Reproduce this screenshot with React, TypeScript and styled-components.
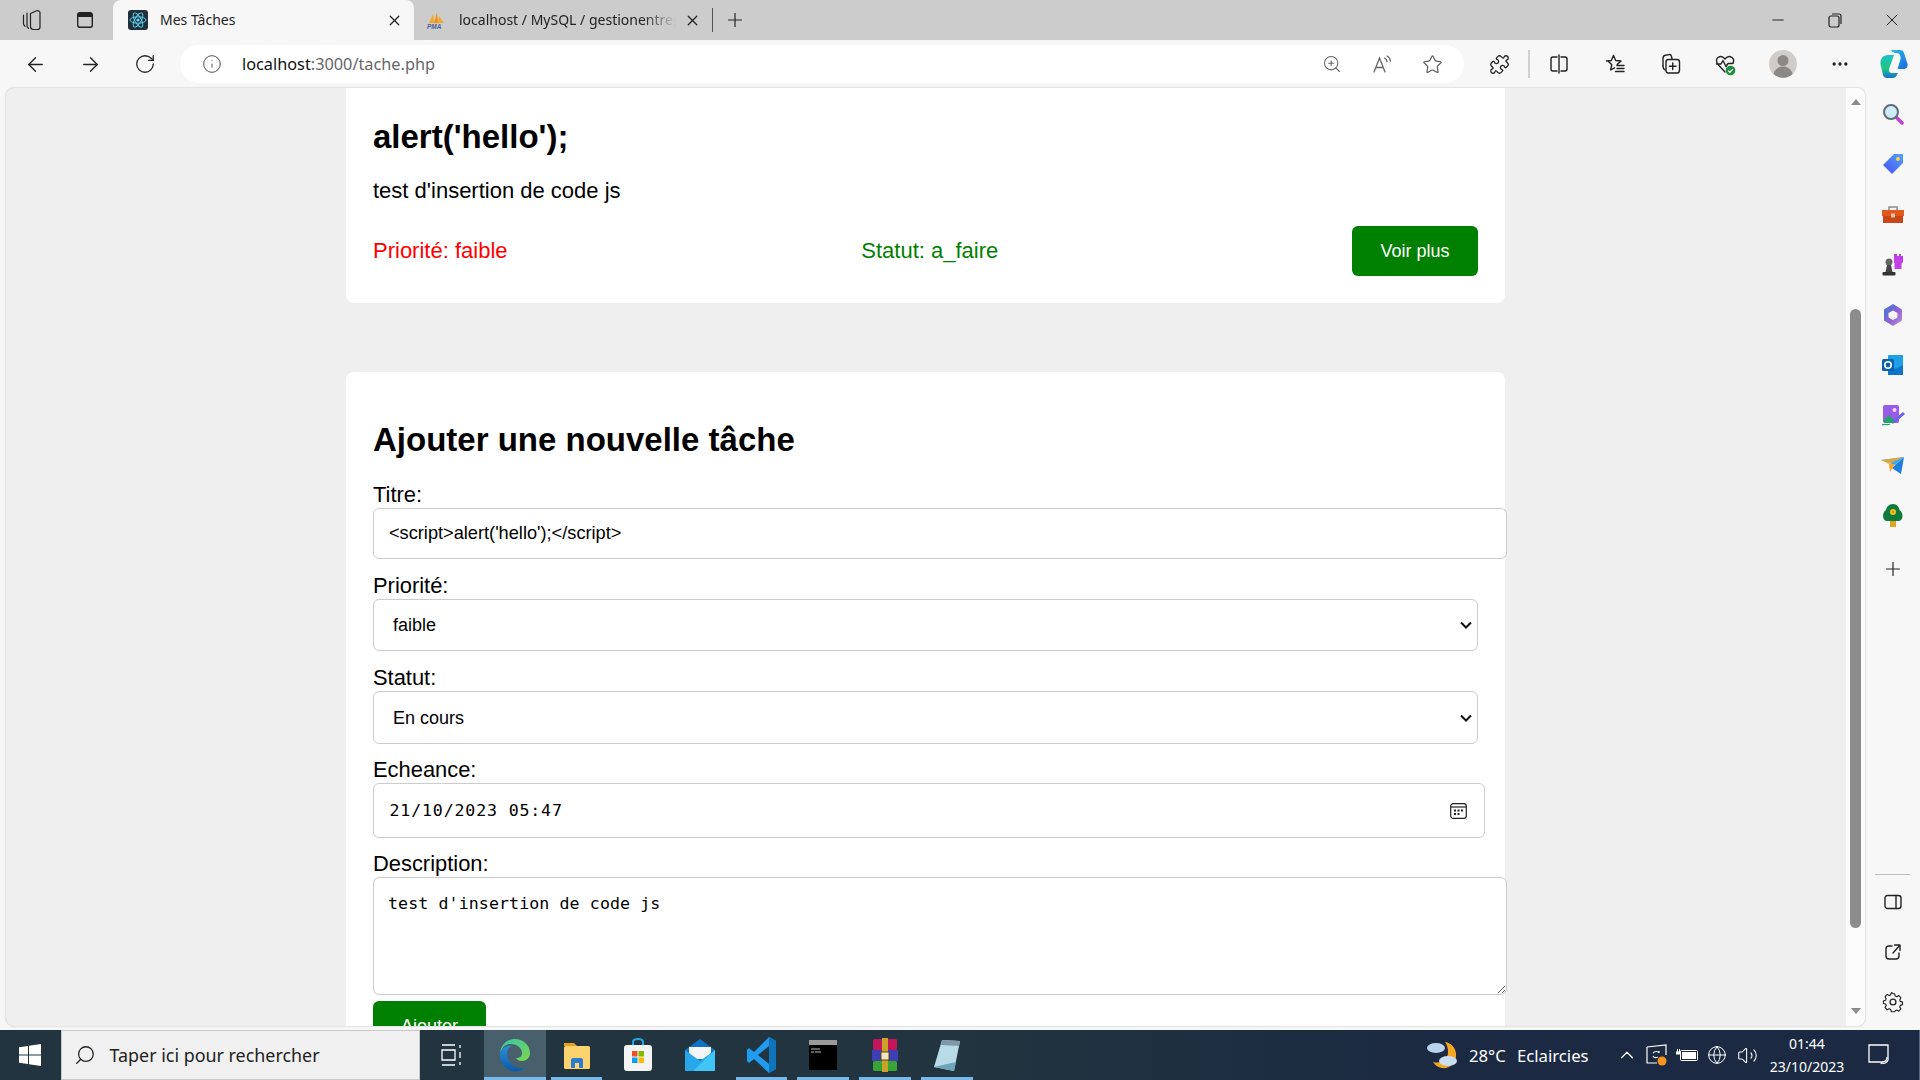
import React from "react";
import styled, { createGlobalStyle } from "styled-components";
import { ArrowLeft, ArrowRight, RotateCw, Info, ZoomIn, Star, Puzzle, X, Plus, Minus, MoreHorizontal, Search, ChevronUp, Globe, Volume2 } from "lucide-react";

const Global = createGlobalStyle`
  html, body { margin: 0; padding: 0; height: 100%; overflow: hidden; background: #f7f7f7; }
  #root { height: 100%; }
`;

const Shell = styled.div`
  height: 1080px; width: 1920px; display: flex; flex-direction: column; overflow: hidden;
  font-family: "Noto Sans", "Open Sans", sans-serif; color: #1b1b1b;
`;

/* tab strip */
const TabStrip = styled.div`
  height: 40px; flex: none; display: flex; align-items: stretch; background: #cccccc; padding-left: 5.5px;
`;
const Slot = styled.div<{ $w: number }>`
  width: ${p => p.$w}px; flex: none; display: flex; align-items: center; justify-content: center; color: #222;
`;
const Tab = styled.div<{ $active?: boolean; $w: number }>`
  width: ${p => p.$w}px; flex: none; display: flex; align-items: center; font-size: 14px; color: #222;
  padding-left: ${p => (p.$active ? 15 : 12)}px; box-sizing: border-box;
  background: ${p => (p.$active ? "#f7f7f7" : "transparent")};
  border-radius: 8px 8px 0 0; margin-left: ${p => (p.$active ? "1.5px" : "0")};
`;
const TabTitle = styled.span<{ $w: number; $gap: number; $fade?: boolean }>`
  width: ${p => p.$w}px; margin: 0 0 2px ${p => p.$gap}px; white-space: nowrap; overflow: hidden;
  ${p => p.$fade ? "mask-image: linear-gradient(90deg,#000 85%,transparent 100%);" : ""}
`;
const TabSep = styled.div`
  width: 1px; height: 24px; align-self: center; background: #555; flex: none;
`;
const Grow = styled.div`flex: 1;`;

/* toolbar */
const Toolbar = styled.div`
  height: 48px; flex: none; display: flex; align-items: center; background: #f7f7f7; padding-left: 7.5px;
`;
const AddressBar = styled.div`
  width: 1284px; height: 38px; flex: none; margin-left: 7.5px; background: #fff; border-radius: 19px;
  display: flex; align-items: center; padding: 0 7px 0 20px; box-sizing: border-box;
`;
const Url = styled.span`
  margin-left: 18px; font-size: 16.3px; color: #666; white-space: nowrap;
  b { font-weight: 400; color: #111; }
`;
const ToolSep = styled.div`
  width: 2px; height: 28px; background: #d0d0d0; margin: 0 1px; flex: none;
`;
const ToolGroup = styled.div`
  display: flex; align-items: center; margin-left: 7px; height: 100%;
`;

/* main */
const Main = styled.div`
  flex: 1; min-height: 0; display: flex; background: #f7f7f7;
`;
const Page = styled.div`
  width: 1859px; flex: none; margin: 0 0 4px 6px; display: flex; border-radius: 8px; overflow: hidden;
  box-shadow: 0 0 2px rgba(0,0,0,.28); background: #efefef;
`;
const Viewport = styled.div`
  flex: 1; min-width: 0; overflow: hidden; padding-left: 340px;
  font-family: "Liberation Sans", Arial, sans-serif; color: #000;
`;
const Card = styled.div<{ $mt?: number; $pt: number }>`
  width: 1159px; box-sizing: border-box; background: #fff; border-radius: ${p => (p.$mt ? "8px" : "0 0 8px 8px")};
  margin-top: ${p => p.$mt ?? 0}px; padding: ${p => p.$pt}px 27px 27px;
`;
const Title = styled.h2<{ $mb: number }>`
  margin: 0 0 ${p => p.$mb}px; font-size: 33px; line-height: 40px; font-weight: 700; white-space: nowrap;
`;
const Desc = styled.p`
  margin: 0 0 23px; font-size: 22px; line-height: 25px;
`;
const Meta = styled.div`
  display: flex; justify-content: space-between; align-items: center;
`;
const MetaText = styled.span<{ $c: string }>`
  color: ${p => p.$c}; font-size: 22px;
`;
const GreenButton = styled.button<{ $w: number }>`
  width: ${p => p.$w}px; height: 50px; border: 0; border-radius: 6px; background: #008000; color: #fff;
  font: 18px "Liberation Sans", Arial, sans-serif; padding: 0; display: block;
`;
const Label = styled.label<{ $mt?: number }>`
  display: block; margin-top: ${p => p.$mt ?? 0}px; font-size: 21.9px; line-height: 23px; padding-bottom: 2px;
`;
const TextInput = styled.input`
  display: block; box-sizing: border-box; width: 1134px; height: 51px; padding: 0 15px; margin: 0;
  border: 1.5px solid #ccc; border-radius: 6px; background: #fff; color: #000; outline: none;
  font: 18.2px "Liberation Sans", Arial, sans-serif;
`;
const SelectWrap = styled.div`
  position: relative; width: 100%;
`;
const Select = styled.select<{ $h: number }>`
  display: block; box-sizing: border-box; width: 100%; height: ${p => p.$h}px; padding: 0 30px 0 19px; margin: 0;
  appearance: none; border: 1.5px solid #ccc; border-radius: 6px; background: #fff; color: #000; outline: none;
  font: 18px "Liberation Sans", Arial, sans-serif;
`;
const Chevron = styled.svg`
  position: absolute; right: 6px; top: 50%; margin-top: -4px; pointer-events: none;
`;
const DateBox = styled.div`
  box-sizing: border-box; width: 1112px; height: 55px; border: 1.5px solid #ccc; border-radius: 6px;
  display: flex; align-items: center; padding: 0 17px 0 15.5px; justify-content: space-between;
`;
const DateValue = styled.input`
  border: 0; padding: 0; outline: none; background: transparent; width: 300px; color: #000;
  font: 16.6px "DejaVu Sans Mono", monospace; letter-spacing: .84px;
`;
const TextArea = styled.textarea`
  display: block; box-sizing: border-box; width: 1134px; height: 118px; padding: 15px 14px 0; margin: 0 0 6px;
  border: 1.5px solid #ccc; border-radius: 6px; background: #fff; color: #000; outline: none;
  font: 16.6px/22px "DejaVu Sans Mono", monospace; letter-spacing: .1px;
`;

/* scrollbar */
const Track = styled.div`
  width: 19px; flex: none; background: #fcfcfc; display: flex; flex-direction: column; align-items: center;
  padding: 11px 0 12px; box-sizing: border-box;
`;
const Arrow = styled.div<{ $down?: boolean }>`
  width: 0; height: 0; border-left: 5.5px solid transparent; border-right: 5.5px solid transparent;
  ${p => p.$down ? "border-top: 6px solid #8c8c8c; margin-top: auto;" : "border-bottom: 6px solid #8c8c8c;"}
`;
const Thumb = styled.div`
  width: 11px; height: 619px; margin-top: 204px; background: #8c8c8c; border-radius: 6px; flex: none;
`;

/* sidebar */
const Sidebar = styled.div`
  flex: 1; display: flex; flex-direction: column; align-items: center; padding: 1px 0 3px;
`;
const SideSlot = styled.div<{ $mt?: number }>`
  height: 50px; margin-top: ${p => p.$mt ?? 0.3}px; width: 100%; flex: none; display: flex; align-items: center; justify-content: center; color: #222;
`;
const SideRule = styled.div`
  width: 35px; height: 1px; background: #bdbdbd; margin-bottom: 2px; flex: none;
`;

/* taskbar */
const Taskbar = styled.div`
  height: 50px; flex: none; display: flex; align-items: stretch; color: #fff;
  background: linear-gradient(90deg, #21343f 0%, #21343f 50%, #1b2a42 75%, #1b2a42 100%);
`;
const StartButton = styled.div`
  width: 60.5px; flex: none; display: flex; align-items: center; justify-content: center;
`;
const SearchBox = styled.div`
  width: 359.5px; flex: none; box-sizing: border-box; background: #f0f0f0; border: 1px solid #c8c8c8;
  display: flex; align-items: center; padding-left: 12px; color: #222; font-size: 17.9px; gap: 14px; white-space: nowrap;
`;
const AppSlot = styled.div<{ $active?: boolean; $on?: boolean }>`
  width: 61.7px; flex: none; display: flex; align-items: center; justify-content: center; position: relative;
  background: ${p => (p.$active ? "#47606c" : "transparent")};
  ${p => p.$on ? `&::after { content: ""; position: absolute; bottom: 0; height: 3px; background: #76b9ed;
    left: ${p.$active ? 0 : 5}px; right: ${p.$active ? 0 : 5}px; }` : ""}
`;
const Weather = styled.div`
  margin-left: auto; width: 185px; flex: none; box-sizing: border-box; display: flex; align-items: center; font-size: 16.7px; white-space: nowrap;
`;
const WeatherText = styled.span<{ $w: number; $ml: number }>`
  width: ${p => p.$w}px; margin-left: ${p => p.$ml}px; flex: none;
`;
const Tray = styled.div`
  width: 30px; flex: none; display: flex; align-items: center; justify-content: center;
`;
const Clock = styled.div`
  width: 90px; flex: none; display: flex; flex-direction: column; align-items: center; justify-content: center; font-size: 14px; line-height: 23px; white-space: nowrap;
`;
const NotifySlot = styled.div`
  width: 54px; flex: none; display: flex; align-items: center; justify-content: center;
`;
const ShowDesktop = styled.div`
  width: 14px; flex: none; box-sizing: border-box; border-right: 1px solid #5c6878;
`;

/* drawings */
const line = { fill: "none", stroke: "currentColor", strokeWidth: 1.4, strokeLinecap: "round" as const, strokeLinejoin: "round" as const };

const SelectChevron = () => (
  <Chevron width="12" height="8" viewBox="0 0 12 8"><path d="M1 1.500l5 5 5-5" fill="none" stroke="#111" strokeWidth="2" /></Chevron>
);
const Workspaces = () => (
  <svg width="22" height="24" viewBox="0 0 22 24" {...line} strokeWidth={1.2}>
    <path d="M2.500 7v8.500c0 1.200.6 2 1.500 2.800" /><path d="M6 5v12.500c0 1.200.6 2 1.500 2.800" />
    <path d="M9.500 5.500l6-2.700c1.500-.6 3.500.4 3.500 2v14.200c0 1.500-1 2.500-2.500 2.500h-4c-1.700 0-3-1.200-3-3z" />
  </svg>
);
const TabActions = () => (
  <svg width="20" height="20" viewBox="0 0 20 20">
    <rect x="2.700" y="2.700" width="14.600" height="14.600" rx="2.400" fill="none" stroke="#222" strokeWidth="1.400" />
    <path d="M3 5c0-1.200.8-2 2-2h10c1.200 0 2 .8 2 2v2H3z" fill="#222" />
  </svg>
);
const ReactFav = () => (
  <svg width="20" height="20" viewBox="0 0 20 20">
    <rect width="20" height="20" rx="3" fill="#20303a" />
    <g fill="none" stroke="#61dafb" strokeWidth=".9">
      <ellipse cx="10" cy="10" rx="8" ry="3.200" /><ellipse cx="10" cy="10" rx="8" ry="3.200" transform="rotate(60 10 10)" /><ellipse cx="10" cy="10" rx="8" ry="3.200" transform="rotate(120 10 10)" />
    </g>
    <circle cx="10" cy="10" r="1.600" fill="#61dafb" />
  </svg>
);
const PmaFav = () => (
  <svg width="20" height="20" viewBox="0 0 20 20">
    <path d="M3 13L7 4l1 9z" fill="#f6a821" /><path d="M8 13l3-11 1 11z" fill="#f29111" /><path d="M12 13l1-7 5 7z" fill="#f6a821" />
    <text x="1" y="19" fontSize="6.500" fontStyle="italic" fontWeight="700" fill="#4a5e9b" fontFamily="Liberation Sans">PMA</text>
  </svg>
);
const Restore = () => (
  <svg width="16" height="16" viewBox="0 0 16 16" fill="none" stroke="#222" strokeWidth="1.200">
    <rect x="2" y="4" width="10" height="11" rx="2" /><path d="M5 2h7c1.200 0 2 .8 2 2v8" />
  </svg>
);
const ReadAloud = () => (
  <svg width="22" height="22" viewBox="0 0 22 22" fill="none" stroke="#666" strokeWidth="1.300" strokeLinecap="round">
    <path d="M3 19L8.500 5 14 19M5 14.500h7" /><path d="M13.500 5c1.400.7 2.300 2 2.600 3.600M16 3c2 1 3.200 3 3.500 5" />
  </svg>
);
const SplitScreen = () => (
  <svg width="22" height="22" viewBox="0 0 22 22" {...line} stroke="#222">
    <path d="M9 4H5C3.800 4 3 4.800 3 6v10c0 1.200.8 2 2 2h4M13 4h4c1.200 0 2 .8 2 2v10c0 1.200-.8 2-2 2h-4M11 2v18" />
  </svg>
);
const Favorites = () => (
  <svg width="22" height="22" viewBox="0 0 22 22" {...line} stroke="#222">
    <path d="M9.500 2.500l2.200 5 5.300.5-3.800 3.500M4 8l3.800 3.700L6.600 17l4-2.200M9.500 2.500L7.300 7.500 2.500 8" />
    <path d="M13 12.500h7M13 15.500h7M11.500 18.500h8.500" />
  </svg>
);
const Collections = () => (
  <svg width="22" height="22" viewBox="0 0 22 22" {...line} stroke="#222">
    <path d="M4 13V5c0-1.500 1-2.500 2.400-2.800L10 1.600c1.300-.2 2.200.5 2.500 1.700L13 6" />
    <path d="M4 13c0 1.700.6 3 1.800 3.800" />
    <rect x="7" y="6.500" width="13.500" height="13.500" rx="2.400" /><path d="M13.700 10v6.500M10.500 13.200H17" />
  </svg>
);
const HeartCheck = () => (
  <svg width="24" height="24" viewBox="0 0 24 24">
    <path d="M12 20l-7-7.500C3 10 3 7 5 5.500c2.200-1.600 5-1 7 1.500 2-2.500 4.800-3.100 7-1.500 1.800 1.400 2 3.600 1 5.500" {...line} stroke="#222" />
    <path d="M3.500 12H8l2-3.500 3 6 2-3h5" {...line} stroke="#222" />
    <circle cx="17.500" cy="18.500" r="4.800" fill="#1e8e3e" /><path d="M15.200 18.600l1.700 1.700 3-3.200" fill="none" stroke="#fff" strokeWidth="1.300" />
  </svg>
);
const Avatar = () => (
  <svg width="28" height="28" viewBox="0 0 28 28">
    <circle cx="14" cy="14" r="14" fill="#cfccca" /><circle cx="14" cy="10.500" r="5.500" fill="#8c8885" /><path d="M4.500 24c1-5 5-7.500 9.500-7.500s8.500 2.500 9.500 7.500a14 14 0 0 1-19 0z" fill="#8c8885" />
  </svg>
);
const Copilot = () => (
  <svg width="30" height="30" viewBox="0 0 30 30">
    <defs>
      <linearGradient id="cpA" x1="0" y1="0" x2="1" y2="1"><stop offset="0" stopColor="#27c3e8" /><stop offset="1" stopColor="#1a66e0" /></linearGradient>
      <linearGradient id="cpB" x1="0" y1="0" x2="0" y2="1"><stop offset="0" stopColor="#1cc3c8" /><stop offset=".6" stopColor="#21c47f" /><stop offset="1" stopColor="#1570d8" /></linearGradient>
    </defs>
    <path d="M12 1h9c2 0 3.500 1 4 3l3.500 11c.7 2.500-1 5-4 5h-6l3-10c.7-3-1-6-4-6-2 0-4 0-5.500-3z" fill="url(#cpA)" />
    <path d="M9 6h6l-5 14c-.6 2 .5 4 3 4h6c-1 3-3 5-6 5H8c-2 0-3.500-1-4-3L1.500 15C1 10 4 6 9 6z" fill="url(#cpB)" />
  </svg>
);
const SearchPurple = () => (
  <svg width="22" height="22" viewBox="0 0 22 22">
    <path d="M14 14l6 6" stroke="#c33fd8" strokeWidth="3.500" strokeLinecap="round" />
    <circle cx="9" cy="9" r="7" fill="#cfeaf8" stroke="#5f6d77" strokeWidth="2" />
  </svg>
);
const TagIcon = () => (
  <svg width="22" height="22" viewBox="0 0 22 22">
    <defs><linearGradient id="tg" x1="0" y1="1" x2="1" y2="0"><stop offset="0" stopColor="#4d4cf5" /><stop offset="1" stopColor="#4ca5f9" /></linearGradient></defs>
    <path d="M12 1h8c.7 0 1 .4 1 1v8L10 21 1 12z" fill="url(#tg)" /><circle cx="16" cy="6" r="2" fill="#ffd23c" />
  </svg>
);
const Toolbox = () => (
  <svg width="24" height="22" viewBox="0 0 24 22">
    <path d="M8 6V3h8v3" fill="none" stroke="#8a8a8a" strokeWidth="1.500" />
    <rect x="1" y="6" width="22" height="6" fill="#e2571e" /><rect x="2" y="12" width="20" height="7" fill="#c8461a" />
    <rect x="10" y="9.500" width="4" height="4" rx="1" fill="#f7c9a8" />
  </svg>
);
const Chess = () => (
  <svg width="24" height="24" viewBox="0 0 24 24">
    <path d="M14 1h2v2h2V1h2v2h2v6l-1.500 1.500V16h-7v-5.500L13 9V1z" fill="#c53fe8" />
    <circle cx="8" cy="9" r="3.500" fill="#666" /><path d="M6 12h4l1.500 7h-7z" fill="#444" /><rect x="1.500" y="19" width="13" height="3.500" rx="1" fill="#333" />
  </svg>
);
const M365 = () => (
  <svg width="22" height="24" viewBox="0 0 22 24">
    <defs><linearGradient id="ms" x1="0" y1="0" x2="1" y2="1"><stop offset="0" stopColor="#2d7fd9" /><stop offset=".5" stopColor="#8b5fd4" /><stop offset="1" stopColor="#c68fe0" /></linearGradient></defs>
    <path d="M11 1l9 5.500v11L11 23 2 17.500v-11z" fill="url(#ms)" /><path d="M11 7.500l4.500 2.500v4.500L11 17l-4.500-2.500V10z" fill="#f7f7f7" />
  </svg>
);
const Outlook = () => (
  <svg width="22" height="22" viewBox="0 0 22 22">
    <rect x="6" y="1" width="15" height="20" rx="1" fill="#1da1e6" /><path d="M6 11l7.500 4L21 11v10H6z" fill="#0f75c8" />
    <rect x="0" y="5" width="12" height="12" rx="1.500" fill="#0a5fb0" /><circle cx="6" cy="11" r="3.200" fill="none" stroke="#fff" strokeWidth="1.600" />
  </svg>
);
const Designer = () => (
  <svg width="24" height="24" viewBox="0 0 24 24">
    <rect x="2" y="1" width="16" height="18" rx="2" fill="#9a5be8" /><circle cx="13.500" cy="6" r="2" fill="#f0e2fb" />
    <path d="M2 17l6-6 6 6v2H4z" fill="#23a267" /><path d="M22 8l2 2-9 8-4 2 2-4z" fill="#6c63e9" /><path d="M1 21c3-2 5 1 8-1" fill="none" stroke="#23a267" strokeWidth="1.200" />
  </svg>
);
const Plane = () => (
  <svg width="24" height="20" viewBox="0 0 24 20">
    <path d="M0 4l23-3-9 8z" fill="#35a7f2" /><path d="M23 1l-3 17-9-6z" fill="#1a7ee0" /><path d="M14 8L9 16l-1-8z" fill="#f5a623" /><path d="M0 4l8 4 15-7z" fill="#f5a623" opacity=".85" />
  </svg>
);
const TreeIcon = () => (
  <svg width="20" height="24" viewBox="0 0 20 24">
    <rect x="7" y="16" width="6" height="7" fill="#e2a11e" /><path d="M10 0c4 0 6 3 6.500 6 2 1 3 4 3 6 0 3-2 5-4 5H4c-2 0-4-2-4-5 0-2 1-5 3-6 .5-3 3-6 7-6z" fill="#0f7a3c" />
    <circle cx="10" cy="8" r="3" fill="#f5c518" /><circle cx="10" cy="8" r="1.200" fill="#d98a00" />
  </svg>
);
const PanelIcon = () => (
  <svg width="18" height="16" viewBox="0 0 18 16" {...line} stroke="#222">
    <rect x="1" y="1.500" width="16" height="13" rx="2.500" /><path d="M12 1.500v13" />
  </svg>
);
const ExternalIcon = () => (
  <svg width="18" height="18" viewBox="0 0 18 18" {...line} stroke="#222">
    <path d="M8 3H5C3 3 2 4 2 6v7c0 2 1 3 3 3h7c2 0 3-1 3-3v-3" /><path d="M9 10l7-8M10.500 2H16v5.500" />
  </svg>
);
const Gear = () => (
  <svg width="22" height="22" viewBox="0 0 24 24" {...line} stroke="#222">
    <path d="M12 2l2 .3.8 2.700 1.800.8 2.500-1.300 2.500 2.800-1.400 2.300.6 1.900 2.700.9v3l-2.700.9-.7 1.800 1.400 2.400-2.500 2.800-2.500-1.300-1.800.8L14 24h-4l-.8-2.800-1.800-.8-2.500 1.300-2.500-2.800 1.400-2.400-.7-1.800L.4 14v-3l2.700-.9.600-1.900L2.300 5.900l2.500-2.800 2.500 1.300 1.800-.8L10 .8z" transform="translate(1.200 1) scale(.9)" />
    <circle cx="12" cy="12" r="3.200" />
  </svg>
);
const CalendarIcon = () => (
  <svg width="17" height="16" viewBox="0 0 17 16">
    <rect x=".7" y=".7" width="15.600" height="14.600" rx="2.500" fill="none" stroke="#222" strokeWidth="1.200" />
    <path d="M1 4h15" stroke="#222" strokeWidth="1.200" />
    <g fill="#222"><rect x="4" y="6.500" width="2" height="2" /><rect x="7.500" y="6.500" width="2" height="2" /><rect x="11" y="6.500" width="2" height="2" /><rect x="4" y="10" width="2" height="2" /><rect x="7.500" y="10" width="2" height="2" /></g>
  </svg>
);
const WinLogo = () => (
  <svg width="22" height="22" viewBox="0 0 22 22" fill="#fff">
    <path d="M0 3.200l9-1.300v8.600H0zM10 1.700L22 0v10.500H10zM0 11.500h9v8.600l-9-1.300zM10 11.500h12V22l-12-1.700z" />
  </svg>
);
const TaskView = () => (
  <svg width="22" height="24" viewBox="0 0 22 24" fill="none" stroke="#fff" strokeWidth="1.300">
    <path d="M1 2h13M1 22h13M1 7h13v10H1zM19 2v3M19 9v6M19 19v3" />
  </svg>
);
const EdgeIcon = () => (
  <svg width="32" height="34" viewBox="0 0 32 34">
    <defs>
      <linearGradient id="eg" x1="0" y1="0" x2="1" y2="1"><stop offset="0" stopColor="#36c6a8" /><stop offset="1" stopColor="#7bd84f" /></linearGradient>
      <linearGradient id="eb" x1="0" y1="0" x2="0" y2="1"><stop offset="0" stopColor="#2a8fdc" /><stop offset="1" stopColor="#0c5aa6" /></linearGradient>
    </defs>
    <path d="M1 15C2 6 9 1 16 1c9 0 15 7 15 14 0 5-4 8-8 8-3 0-5-1-6-3 4 0 6-2 6-5 0-5-5-9-11-9S3 10 1 15z" fill="url(#eg)" />
    <path d="M1 15c2-5 7-8 12-7-3 1-5 4-5 8 0 7 6 13 13 14 2 .3 4 0 5-.5-3 3-7 4-10 4C8 33 0 25 1 15z" fill="url(#eb)" />
  </svg>
);
const FolderIcon = () => (
  <svg width="30" height="30" viewBox="0 0 30 30">
    <path d="M2 3h10l3 3h-13z" fill="#e4a11b" /><rect x="2" y="6" width="26" height="23" rx="1.500" fill="#fcd36e" />
    <path d="M9 28v-8c0-1 .8-2 2-2h8c1.200 0 2 1 2 2v8h-4v-5h-4v5z" fill="#2b7bd0" />
  </svg>
);
const StoreIcon = () => (
  <svg width="30" height="34" viewBox="0 0 30 34">
    <path d="M10 8V4c0-2 2-3 5-3s5 1 5 3v4" fill="none" stroke="#22a7e0" strokeWidth="2" />
    <rect x="1" y="7" width="28" height="26" rx="3" fill="#f4f4f4" />
    <rect x="9" y="13" width="5.500" height="5.500" fill="#f25022" /><rect x="15.500" y="13" width="5.500" height="5.500" fill="#7fba00" /><rect x="9" y="19.500" width="5.500" height="5.500" fill="#00a4ef" /><rect x="15.500" y="19.500" width="5.500" height="5.500" fill="#ffb900" />
  </svg>
);
const MailIcon = () => (
  <svg width="30" height="32" viewBox="0 0 30 32">
    <path d="M0 11L15 0l15 11v21H0z" fill="#1072c4" /><path d="M4 8h22v12H4z" fill="#f5f5f5" />
    <path d="M0 11l15 11 15-11v21H0z" fill="#28a8ea" /><path d="M30 11v21H8z" fill="#50d9ff" opacity=".6" />
  </svg>
);
const VsCode = () => (
  <svg width="30" height="38" viewBox="0 0 30 38">
    <path d="M22 1l7 4v28l-7 4-15-14-5 4-2-2v-11l2-2 5 4z" fill="#1f9cf0" /><path d="M22 10L11 19l11 9z" fill="#21343f" /><path d="M22 1l7 4v28l-7 4z" fill="#0e74bc" />
  </svg>
);
const Terminal = () => (
  <svg width="28" height="30" viewBox="0 0 28 30">
    <rect width="28" height="30" fill="#000" /><rect width="28" height="5" fill="#9b9b9b" />
    <path d="M2 9h9M2 12h3M6 12h6" stroke="#bbb" strokeWidth="1" />
  </svg>
);
const WinRar = () => (
  <svg width="28" height="34" viewBox="0 0 28 34">
    <rect x="2" y="1" width="24" height="11" rx="1.500" fill="#c2185b" /><rect x="1" y="12" width="26" height="11" fill="#3f3fb5" /><rect x="2" y="23" width="24" height="10" rx="1.500" fill="#3aa335" />
    <rect x="11" y="0" width="6" height="34" fill="#c9a227" /><rect x="10" y="14" width="8" height="8" fill="#f2e6c2" stroke="#5c4a16" />
  </svg>
);
const NotepadIcon = () => (
  <svg width="28" height="34" viewBox="0 0 28 34">
    <path d="M9 2l18 1-6 30-20-4z" fill="#b8dbe8" /><path d="M9 2l18 1-1 5-18-1z" fill="#7f9aa6" /><path d="M1 29l20 4 2-9z" fill="#6fa5b8" />
  </svg>
);
const WeatherIcon = () => (
  <svg width="32" height="30" viewBox="0 0 32 30">
    <path d="M18 2c7 1 12 7 11 15-1 7-7 12-14 11-4-.5-7-3-9-6 8 2 15-2 15-10 0-4-1-7-3-10z" fill="#f5a623" />
    <ellipse cx="9" cy="8" rx="9" ry="5" fill="#b9d4ec" /><ellipse cx="21" cy="21" rx="9" ry="5" fill="#c9def0" />
  </svg>
);
const ActionIcon = () => (
  <svg width="22" height="22" viewBox="0 0 22 22" fill="none" stroke="#fff" strokeWidth="1.200">
    <path d="M1 3l19-2v10M1 3v16h10" /><path d="M7 9c2-2 5-2 6 0M13 9v-2M7 12c1 2 3 2 5 1" /><circle cx="16" cy="17" r="4.500" fill="#f7931e" stroke="none" />
  </svg>
);
const BatteryIcon = () => (
  <svg width="22" height="14" viewBox="0 0 22 14" fill="#fff">
    <rect x="4.500" y="2.500" width="17" height="10" rx="1" fill="none" stroke="#fff" /><rect x="6" y="4" width="14" height="7" />
    <path d="M0 3.500h5v3H0zM1 1h1v2.500H1zM3 1h1v2.500H3z" />
  </svg>
);
const NotifyIcon = () => (
  <svg width="22" height="22" viewBox="0 0 22 22" fill="none" stroke="#fff" strokeWidth="1.300">
    <path d="M1 1h19v15c-1 3-4 4-6 3l-1-1H1z" /><path d="M14 18l-1 2M19 13c0 3-2 5-5 5" />
  </svg>
);

export default function App() {
  return (
    <Shell>
      <Global />
      <TabStrip>
        <Slot $w={53}><Workspaces /></Slot>
        <Slot $w={53}><TabActions /></Slot>
        <Tab $active $w={301}>
          <ReactFav />
          <TabTitle $w={224} $gap={12}>Mes Tâches</TabTitle>
          <Slot $w={20}><X size={17} strokeWidth={1.8} /></Slot>
        </Tab>
        <Tab $w={298}>
          <PmaFav />
          <TabTitle $w={217} $gap={13} $fade>localhost / MySQL / gestionentreprise</TabTitle>
          <Slot $w={32}><X size={17} strokeWidth={1.8} /></Slot>
        </Tab>
        <TabSep />
        <Slot $w={44}><Plus size={22} strokeWidth={1.3} /></Slot>
        <Grow />
        <Slot $w={57}><Minus size={18} strokeWidth={1.3} /></Slot>
        <Slot $w={57}><Restore /></Slot>
        <Slot $w={57}><X size={20} strokeWidth={1.2} /></Slot>
      </TabStrip>
      <Toolbar>
        <Slot $w={55}><ArrowLeft size={23} strokeWidth={1.4} /></Slot>
        <Slot $w={55}><ArrowRight size={23} strokeWidth={1.4} /></Slot>
        <Slot $w={55}><RotateCw size={22} strokeWidth={1.4} /></Slot>
        <AddressBar>
          <Slot $w={24}><Info size={20} strokeWidth={1.2} color="#555" /></Slot>
          <Url><b>localhost</b>:3000/tache.php</Url>
          <Grow />
          <Slot $w={50}><ZoomIn size={20} strokeWidth={1.3} color="#666" /></Slot>
          <Slot $w={50}><ReadAloud /></Slot>
          <Slot $w={50}><Star size={21} strokeWidth={1.3} color="#555" /></Slot>
        </AddressBar>
        <ToolGroup>
          <Slot $w={56}><Puzzle size={21} strokeWidth={1.5} /></Slot>
          <ToolSep />
          <Slot $w={56}><SplitScreen /></Slot>
          <Slot $w={55}><Favorites /></Slot>
          <Slot $w={55}><Collections /></Slot>
          <Slot $w={56}><HeartCheck /></Slot>
          <Slot $w={59}><Avatar /></Slot>
          <Slot $w={56}><MoreHorizontal size={20} strokeWidth={2} /></Slot>
          <Slot $w={51}><Copilot /></Slot>
        </ToolGroup>
      </Toolbar>
      <Main>
        <Page>
          <Viewport>
            <Card $pt={29}>
              <Title $mb={21}>alert('hello');</Title>
              <Desc>test d'insertion de code js</Desc>
              <Meta>
                <MetaText $c="#ff0000">Priorité: faible</MetaText>
                <MetaText $c="#008000">Statut: a_faire</MetaText>
                <GreenButton $w={126}>Voir plus</GreenButton>
              </Meta>
            </Card>
            <Card $mt={69} $pt={48}>
              <Title $mb={23}>Ajouter une nouvelle tâche</Title>
              <Label>Titre:</Label>
              <TextInput readOnly value="<script>alert('hello');</script>" />
              <Label $mt={15}>Priorité:</Label>
              <SelectWrap>
                <Select $h={52} defaultValue="faible"><option value="faible">faible</option></Select>
                <SelectChevron />
              </SelectWrap>
              <Label $mt={15}>Statut:</Label>
              <SelectWrap>
                <Select $h={53} defaultValue="en"><option value="en">En cours</option></Select>
                <SelectChevron />
              </SelectWrap>
              <Label $mt={14}>Echeance:</Label>
              <DateBox><DateValue readOnly value="21/10/2023 05:47" /><CalendarIcon /></DateBox>
              <Label $mt={14}>Description:</Label>
              <TextArea readOnly value="test d'insertion de code js" />
              <GreenButton $w={113}>Ajouter</GreenButton>
            </Card>
          </Viewport>
          <Track>
            <Arrow />
            <Thumb />
            <Arrow $down />
          </Track>
        </Page>
        <Sidebar>
          <SideSlot $mt={0}><SearchPurple /></SideSlot>
          <SideSlot><TagIcon /></SideSlot>
          <SideSlot><Toolbox /></SideSlot>
          <SideSlot><Chess /></SideSlot>
          <SideSlot><M365 /></SideSlot>
          <SideSlot><Outlook /></SideSlot>
          <SideSlot><Designer /></SideSlot>
          <SideSlot><Plane /></SideSlot>
          <SideSlot><TreeIcon /></SideSlot>
          <SideSlot $mt={3}><Plus size={22} strokeWidth={1.3} /></SideSlot>
          <Grow />
          <SideRule />
          <SideSlot $mt={0}><PanelIcon /></SideSlot>
          <SideSlot $mt={0}><ExternalIcon /></SideSlot>
          <SideSlot $mt={0}><Gear /></SideSlot>
        </Sidebar>
      </Main>
      <Taskbar>
        <StartButton><WinLogo /></StartButton>
        <SearchBox><Search size={22} strokeWidth={1.4} style={{ transform: "scaleX(-1)" }} />Taper ici pour rechercher</SearchBox>
        <Slot $w={64} style={{ color: "#fff" }}><TaskView /></Slot>
        <AppSlot $active $on><EdgeIcon /></AppSlot>
        <AppSlot $on><FolderIcon /></AppSlot>
        <AppSlot><StoreIcon /></AppSlot>
        <AppSlot><MailIcon /></AppSlot>
        <AppSlot $on><VsCode /></AppSlot>
        <AppSlot $on><Terminal /></AppSlot>
        <AppSlot $on><WinRar /></AppSlot>
        <AppSlot $on><NotepadIcon /></AppSlot>
        <Weather>
          <WeatherIcon />
          <WeatherText $w={37} $ml={10}>28°C</WeatherText>
          <WeatherText $w={72} $ml={11}>Eclaircies</WeatherText>
        </Weather>
        <Tray><ChevronUp size={22} strokeWidth={1.3} /></Tray>
        <Tray><ActionIcon /></Tray>
        <Tray><BatteryIcon /></Tray>
        <Tray><Globe size={20} strokeWidth={1.2} /></Tray>
        <Tray><Volume2 size={21} strokeWidth={1.2} /></Tray>
        <Clock><span>01:44</span><span>23/10/2023</span></Clock>
        <NotifySlot><NotifyIcon /></NotifySlot>
        <ShowDesktop />
      </Taskbar>
    </Shell>
  );
}
